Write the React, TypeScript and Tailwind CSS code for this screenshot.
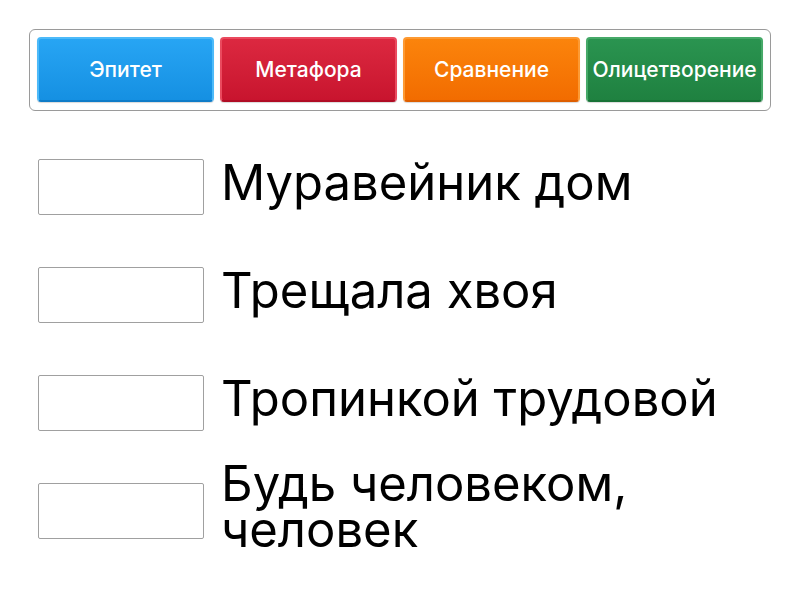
const tiles = [
    { label: "Эпитет", cls: "bg-gradient-to-b from-[#27a5f4] to-[#1590e2] border-[#4dbaf9] border-b-[#0f7cc8]" },
    { label: "Метафора", cls: "bg-gradient-to-b from-[#dc2840] to-[#c8142e] border-[#ea4a5e] border-b-[#b00c24]" },
    { label: "Сравнение", cls: "bg-gradient-to-b from-[#fb840c] to-[#f26c00] border-[#fd9a33] border-b-[#de5e00]" },
    { label: "Олицетворение", cls: "bg-gradient-to-b from-[#2a9450] to-[#1f8140] border-[#46a968] border-b-[#177236]" },
]

const items = ["Муравейник дом", "Трещала хвоя", "Тропинкой трудовой", "Будь человеком, человек"]

export default function App() {
    return (
        <div className="w-[800px] h-[600px] bg-white font-['Inter'] text-black">
            {/* answer tiles */}
            <div className="ml-[29px] mt-[29px] w-[742px] h-[82px] border border-[#9a9a9a] rounded-[6px] p-[7px] flex gap-[6px]">
                {tiles.map((t) => (
                    <div
                        key={t.label}
                        className={`flex-1 h-[65px] rounded-[4px] border-[2px] flex items-center justify-center text-white text-[21px] font-medium whitespace-nowrap shadow-[0_1px_1px_rgba(0,0,0,0.15)] ${t.cls}`}
                    >
                        {t.label}
                    </div>
                ))}
            </div>

            {/* rows */}
            <div className="mt-[22px] ml-[38px] flex flex-col">
                {items.map((text) => (
                    <div key={text} className="h-[108px] flex items-center gap-[17px]">
                        <div className="w-[166px] h-[56px] shrink-0 border border-[#a0a0a0] rounded-[2px] bg-white" />
                        <div className="w-[540px] mb-[8px] text-[49px] leading-[46px]">{text}</div>
                    </div>
                ))}
            </div>
        </div>
    )
}
